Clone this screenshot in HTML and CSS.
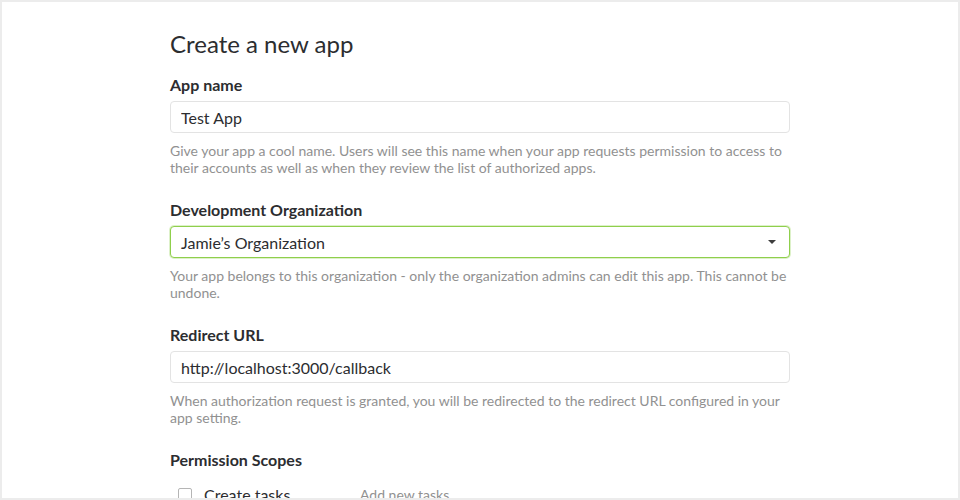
FILE: index.html
```html
<!DOCTYPE html>
<html lang="en">
<head>
<meta charset="utf-8">
<title>Create a new app</title>
<link rel="stylesheet" href="styles.css">
</head>
<body>
<div class="frame">
  <main class="form">
    <h1 class="title">Create a new app</h1>

    <section class="group">
      <label class="label" for="app-name">App name</label>
      <input class="field" id="app-name" type="text" value="Test App">
      <p class="help">Give your app a cool name. Users will see this name when your app requests permission to access to their accounts as well as when they review the list of authorized apps.</p>
    </section>

    <section class="group">
      <label class="label" for="org">Development Organization</label>
      <div class="field select" id="org">
        <span>Jamie’s Organization</span>
        <span class="caret"></span>
      </div>
      <p class="help">Your app belongs to this organization - only the organization admins can edit this app. This cannot be undone.</p>
    </section>

    <section class="group">
      <label class="label" for="redirect">Redirect URL</label>
      <input class="field" id="redirect" type="text" value="http://localhost:3000/callback">
      <p class="help">When authorization request is granted, you will be redirected to the redirect URL configured in your app setting.</p>
    </section>

    <section class="group">
      <div class="label">Permission Scopes</div>
      <div class="scopes">
        <div class="scope">
          <span class="checkbox"></span>
          <span class="scope-name">Create tasks</span>
          <span class="scope-desc">Add new tasks</span>
        </div>
      </div>
    </section>
  </main>
</div>
</body>
</html>
```

FILE: styles.css
```css
* { box-sizing: border-box; }
html, body { margin: 0; padding: 0; background: #fff; }
body {
  font-family: Lato, "Noto Sans", sans-serif;
  color: #2c2d30;
}
.frame {
  width: 960px;
  height: 500px;
  border: 2px solid #ececec;
  overflow: hidden;
}
.form {
  width: 620px;
  margin: 0 auto;
  padding-top: 26px;
  display: flex;
  flex-direction: column;
}
.title {
  margin: 0 0 15px;
  font-size: 24px;
  line-height: 32px;
  font-weight: 400;
}
.group {
  display: flex;
  flex-direction: column;
  margin-bottom: 24px;
}
.label {
  font-size: 16px;
  line-height: 20px;
  font-weight: 700;
  margin-bottom: 6px;
}
.field {
  width: 100%;
  height: 32px;
  border: 1px solid #e3e3e3;
  border-radius: 4px;
  padding: 0 10px;
  font-family: inherit;
  font-size: 16px;
  color: #2c2d30;
  background: #fff;
  outline: none;
  margin: 0;
}
.select {
  display: flex;
  align-items: center;
  justify-content: space-between;
  border-color: #8fcf4c;
  box-shadow: 0 0 0 1px rgba(143, 207, 76, 0.3);
  padding-right: 13px;
}
.caret {
  width: 0;
  height: 0;
  border-left: 4px solid transparent;
  border-right: 4px solid transparent;
  border-top: 4px solid #3d3d3d;
}
.help {
  margin: 10px 0 0;
  font-size: 14px;
  line-height: 16.5px;
  color: #919191;
}
.scopes {
  padding: 9px 0 0 8px;
}
.scope {
  display: grid;
  grid-template-columns: 14px 144px 1fr;
  column-gap: 12px;
  align-items: center;
}
.checkbox {
  width: 14px;
  height: 14px;
  border: 1px solid #b5b5b5;
  border-radius: 2px;
  background: #fff;
}
.scope-name {
  font-size: 16px;
  line-height: 20px;
}
.scope-desc {
  font-size: 14px;
  line-height: 20px;
  color: #919191;
}
```
